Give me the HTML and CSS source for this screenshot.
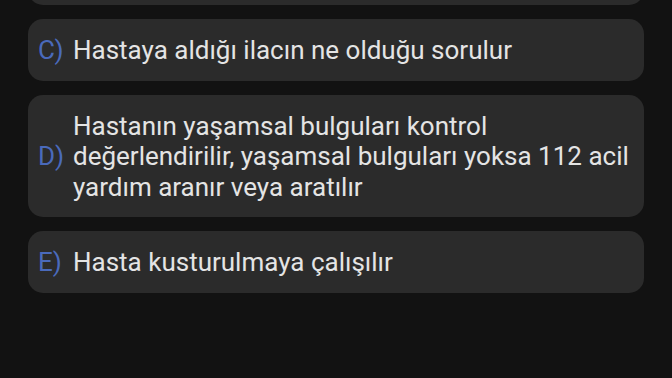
FILE: index.html
```html
<!DOCTYPE html>
<html lang="tr">
<head>
  <meta charset="UTF-8">
  <title>Soru</title>
  <link rel="stylesheet" href="styles.css">
</head>
<body>

  <div class="options">
    <div class="option option-cut"></div>
    <div class="option">
      <span class="letter">C)</span>
      <span class="text">Hastaya aldığı ilacın ne olduğu sorulur</span>
    </div>
    <div class="option">
      <span class="letter">D)</span>
      <span class="text">Hastanın yaşamsal bulguları kontrol değerlendirilir, yaşamsal bulguları yoksa 112 acil yardım aranır veya aratılır</span>
    </div>
    <div class="option">
      <span class="letter">E)</span>
      <span class="text">Hasta kusturulmaya çalışılır</span>
    </div>
  </div>

</body>
</html>
```

FILE: styles.css
```css
body {
  margin: 0;
  background-color: #121212;
  font-family: Roboto, "Noto Sans", sans-serif;
  color: #e4e4e4;
  overflow: hidden;
}

.options {
  display: flex;
  flex-direction: column;
  gap: 14px;
  padding: 0 28px;
}

.option {
  display: grid;
  grid-template-columns: 35px 1fr;
  align-items: center;
  padding: 16px 12px 15px 10px;
  background: #2b2b2b;
  border-radius: 15px;
  font-size: 26px;
  line-height: 30.6px;
}

.option-cut {
  height: 30px;
  margin-top: -56px;
}

.letter {
  color: #4a6abb;
}
```
